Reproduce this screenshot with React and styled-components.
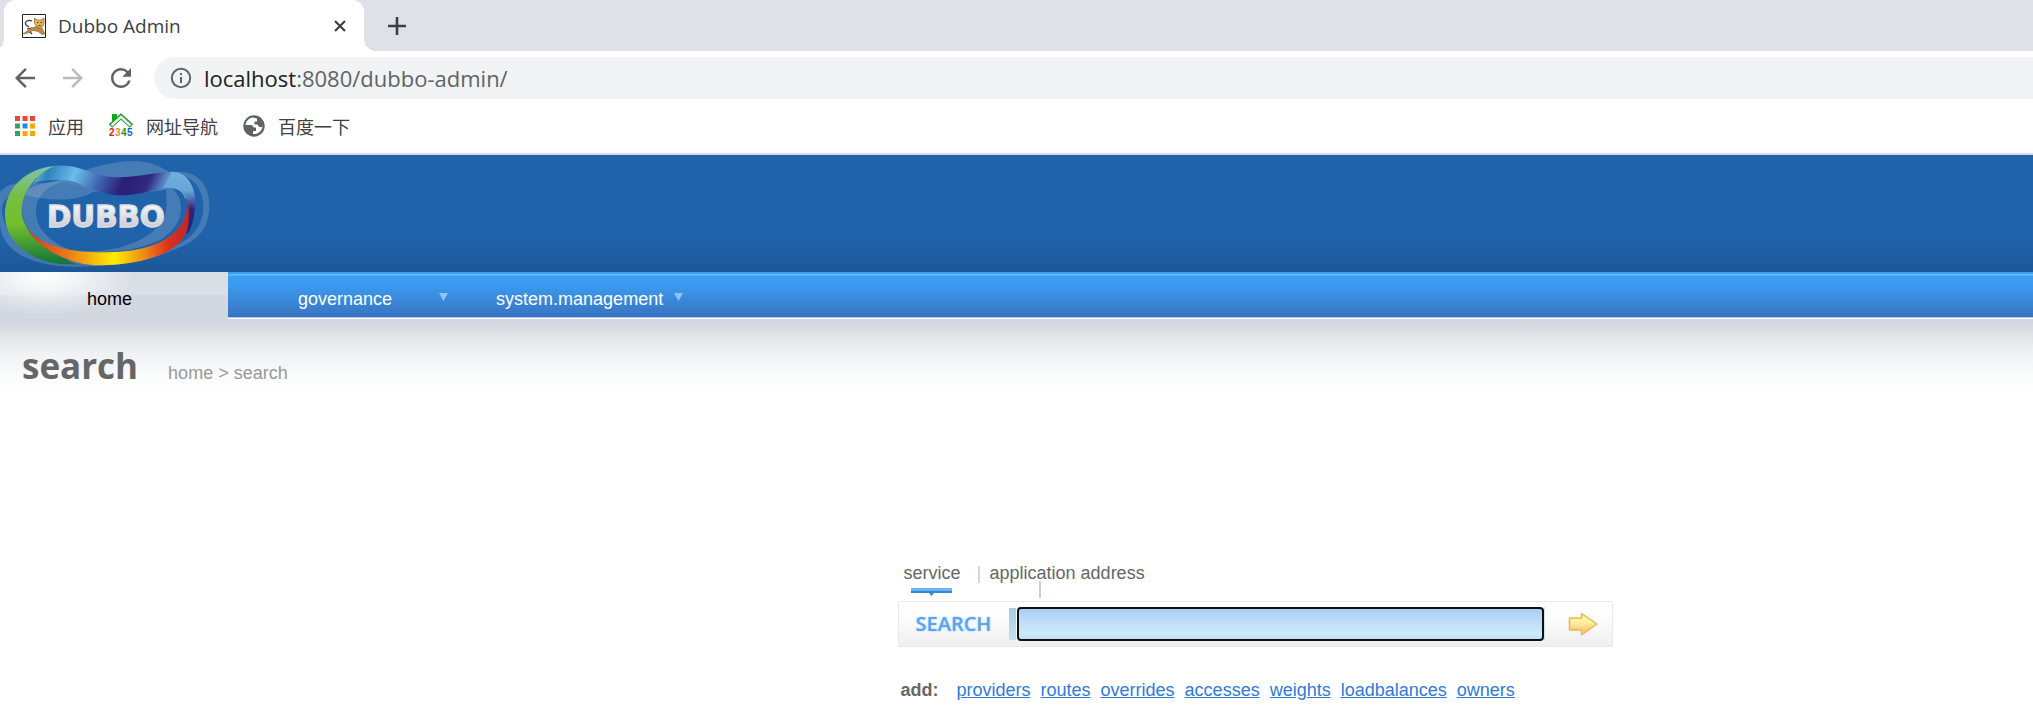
import * as React from 'react'
import styled, { createGlobalStyle, css } from 'styled-components'
import { MdArrowBack, MdArrowForward, MdRefresh } from 'react-icons/md'

const uiFont = '"Open Sans", "Noto Sans CJK SC", sans-serif'
const pageFont = '"Liberation Sans", Arial, sans-serif'

const menus = [
  { label: 'governance', offset: 70, gap: 47 },
  { label: 'system.management', offset: 48, gap: 11 },
]

const addLinks = [
  'providers',
  'routes',
  'overrides',
  'accesses',
  'weights',
  'loadbalances',
  'owners',
]

const appColors = [
  '#f44336', '#f44336', '#f44336',
  '#34a062', '#1e88f5', '#ffa600',
  '#34a062', '#ffa600', '#ffa600',
]

const App = () => (
  <>
    <GlobalStyle />
    <Browser />
    <Header>
      <DubboLogo />
    </Header>
    <Nav>
      <HomeLink href="#home">home</HomeLink>
      {menus.map(({ label, offset, gap }) => (
        <MenuLink key={label} href={`#${label}`} $offset={offset} $gap={gap}>
          {label}
          <Caret viewBox="0 0 9 8">
            <path d="M0 0h9L4.500 8z" fill="#8cc4f8" />
          </Caret>
        </MenuLink>
      ))}
    </Nav>
    <Main>
      <TitleRow>
        <Title>search</Title>
        <Crumbs>home &gt; search</Crumbs>
      </TitleRow>
      <SearchPanel />
    </Main>
  </>
)
export default App

const Browser = () => (
  <div>
    <TabStrip>
      <Tab>
        <TomcatIcon />
        <TabTitle>Dubbo Admin</TabTitle>
        <IconButton aria-label="Close tab">
          <svg width="12" height="12" viewBox="0 0 12 12">
            <path d="M1 1l10 10M11 1L1 11" stroke="#3c4043" strokeWidth="2.200" />
          </svg>
        </IconButton>
      </Tab>
      <IconButton aria-label="New tab">
        <svg width="18" height="18" viewBox="0 0 18 18">
          <path d="M9 0v18M0 9h18" stroke="#3c4043" strokeWidth="2.600" />
        </svg>
      </IconButton>
    </TabStrip>
    <Toolbar>
      <IconButton aria-label="Back">
        <MdArrowBack size={30} color="#5f6368" />
      </IconButton>
      <IconButton aria-label="Forward">
        <MdArrowForward size={30} color="#babcbe" />
      </IconButton>
      <IconButton aria-label="Reload">
        <MdRefresh size={30} color="#5f6368" />
      </IconButton>
      <Omnibox>
        <svg width="22" height="22" viewBox="0 0 22 22">
          <circle cx="11" cy="11" r="9.200" fill="none" stroke="#5f6368" strokeWidth="2" />
          <path d="M11 10v6M11 6v2" stroke="#5f6368" strokeWidth="2" />
        </svg>
        <Url>
          <b>localhost</b>:8080/dubbo-admin/
        </Url>
      </Omnibox>
    </Toolbar>
    <Bookmarks>
      <Bookmark href="#apps">
        <svg width="20" height="20" viewBox="0 0 20 20">
          {appColors.map((fill, i) => (
            <rect
              key={i}
              x={(i % 3) * 7.5}
              y={Math.floor(i / 3) * 7.5}
              width="5"
              height="5"
              fill={fill}
            />
          ))}
        </svg>
        应用
      </Bookmark>
      <Bookmark href="#2345">
        <HouseIcon />
        网址导航
      </Bookmark>
      <Bookmark href="#baidu">
        <GlobeIcon />
        百度一下
      </Bookmark>
    </Bookmarks>
  </div>
)

const SearchPanel = () => (
  <Panel>
    <SearchTabs>
      <SearchTab href="#service">
        service
        <ActiveMark viewBox="0 0 41 8">
          <path d="M0 0h41v5H23l-2.500 3L18 5H0z" fill="#3d87c8" />
          <path d="M0 0h41v3H0z" fill="#66b5f6" />
        </ActiveMark>
      </SearchTab>
      <Divider />
      <SearchTab href="#application">application</SearchTab>
      <SearchTab href="#address">address</SearchTab>
      <LowDivider />
    </SearchTabs>
    <SearchBox onSubmit={e => e.preventDefault()}>
      <SearchLabel htmlFor="keyword">SEARCH</SearchLabel>
      <FieldTrack>
        <Field id="keyword" type="text" />
      </FieldTrack>
      <GoButton aria-label="Go">
        <svg width="30" height="26" viewBox="0 0 30 26">
          <defs>
            <linearGradient id="go" x2="0" y2="1">
              <stop offset="0" stopColor="#fff6a0" />
              <stop offset=".4" stopColor="#fff2a0" />
              <stop offset=".8" stopColor="#ffc67c" />
              <stop offset="1" stopColor="#ffe48e" />
            </linearGradient>
          </defs>
          <path
            d="M1.500 7h12V2.500L29 13 13.500 24v-5h-12z"
            fill="url(#go)"
            stroke="#e2bb50"
            strokeWidth="1.500"
            strokeLinejoin="round"
          />
        </svg>
      </GoButton>
    </SearchBox>
    <AddRow>
      <strong>add:</strong>
      {addLinks.map(name => (
        <a key={name} href={`#${name}`}>
          {name}
        </a>
      ))}
    </AddRow>
  </Panel>
)

const TomcatIcon = () => (
  <svg width="24" height="24" viewBox="0 0 24 24">
    <path d="M.5.5h23v23H.5z" fill="#fff" stroke="#222" />
    <path
      d="M10 7C6 5 2 8 4 11l3 2M5 15l5-1M7 17l3 3"
      fill="none"
      stroke="#333"
      strokeWidth="1.200"
    />
    <path
      d="M1 19.500c3-1 5-3.500 8-5.500l4-1 2-1 5 2 3 6-3 .5-4-3-5-1-5 2.500-4 1z"
      fill="#c08a3c"
      stroke="#5c4420"
      strokeWidth=".4"
    />
    <path
      d="M12.500 4l2.500 2h4l3-2v5l-1 3-3.500 2-3.500-2-1.500-3z"
      fill="#e5b458"
      stroke="#6b5124"
      strokeWidth=".6"
    />
    <path d="M15 8.500h1.500M18.500 8.500H20M16.500 11.500h2" stroke="#4d3914" />
  </svg>
)

const HouseIcon = () => (
  <svg width="24" height="26" viewBox="0 0 24 26">
    <path d="M3 1h5v5L3 9z" fill="#12a812" />
    <path d="M1.500 13L12 3.500 22.500 13" fill="none" stroke="#27933a" strokeWidth="5" />
    <path d="M2.500 12.500L12 3.800 21.500 12.500" fill="none" stroke="#e2f5de" strokeWidth="2.400" />
    <g fontFamily="Liberation Sans" fontWeight="bold" fontSize="10">
      <text x="0" y="23" fill="#e02020">2</text>
      <text x="6" y="23" fill="#f58a1c">3</text>
      <text x="12" y="23" fill="#1c9a2c">4</text>
      <text x="18" y="23" fill="#1763c6">5</text>
    </g>
  </svg>
)

const GlobeIcon = () => (
  <svg width="22" height="22" viewBox="0 0 22 22">
    <circle cx="11" cy="11" r="10.700" fill="#5f6368" />
    <path
      d="M10 2.500C6 3 3 6 2.500 10h5c2 0 3 1 3 2.500h2.500v3.500h-3v3c5 .5 9-3 9.500-7.500-1 1-3 1-4-.500l-1-1.500h-3V6.500h2.500V3.500z"
      fill="#fff"
    />
  </svg>
)

const DubboLogo = () => (
  <svg width="210" height="117" viewBox="0 15 630 351">
    <defs>
      <linearGradient id="green" x2="0" y2="1">
        <stop offset="0" stopColor="#7cc4b4" />
        <stop offset=".3" stopColor="#78be46" />
        <stop offset=".6" stopColor="#72be2e" />
        <stop offset="1" stopColor="#0e7438" />
      </linearGradient>
      <linearGradient
        id="blue"
        gradientUnits="userSpaceOnUse"
        x1="110"
        y1="50"
        x2="560"
        y2="250"
      >
        <stop offset="0" stopColor="#77b9b9" />
        <stop offset=".08" stopColor="#2e84bd" />
        <stop offset=".23" stopColor="#6cbcea" />
        <stop offset=".38" stopColor="#3f68b0" />
        <stop offset=".52" stopColor="#2b1d78" />
        <stop offset=".66" stopColor="#30297f" />
        <stop offset=".78" stopColor="#66a8dc" />
        <stop offset=".88" stopColor="#6fb4e2" />
        <stop offset="1" stopColor="#4a62ad" />
      </linearGradient>
      <linearGradient id="edge" x2="0" y2="1">
        <stop offset="0" stopColor="#6db1e0" />
        <stop offset=".3" stopColor="#6aa4d8" />
        <stop offset=".6" stopColor="#2c2380" />
        <stop offset="1" stopColor="#282073" />
      </linearGradient>
      <linearGradient id="warm">
        <stop offset="0" stopColor="#c63b27" />
        <stop offset=".25" stopColor="#e9781a" />
        <stop offset=".54" stopColor="#ffee00" />
        <stop offset=".72" stopColor="#ee8d16" />
        <stop offset=".87" stopColor="#dc321d" />
        <stop offset="1" stopColor="#b9272a" />
      </linearGradient>
      <linearGradient id="word" x2="0" y2="1">
        <stop offset="0" stopColor="#fff" />
        <stop offset="1" stopColor="#bfc0c5" />
      </linearGradient>
    </defs>
    <g fill="#9fb6cf" fillOpacity=".3" fillRule="evenodd">
      <path d="M0 125C50 75 110 115 170 92C240 65 320 33 405 33C460 35 490 55 510 68C580 55 628 95 628 165C628 250 575 280 520 300C420 345 300 350 210 350C90 347 0 300 0 220zM5 170C5 245 70 300 150 325C320 350 470 330 565 265C620 220 620 150 590 105C560 70 520 66 480 90L350 125 280 125C220 160 130 150 80 135C50 125 20 130 5 170z" />
      <path d="M65 140C80 110 130 95 190 92L350 136 490 95C560 130 565 220 480 270C400 310 290 310 210 305C100 290 60 230 65 140zM108 180C105 230 140 270 210 300C330 315 430 280 480 225C505 200 500 150 498 120L350 136 190 95C140 105 110 140 108 180z" />
    </g>
    <path
      d="M168 47C75 55 15 115 15 195C17 285 105 345 215 343L235 345C150 315 65 250 65 180C68 120 105 75 168 47z"
      fill="url(#green)"
    />
    <path
      d="M168 47C245 42 280 82 355 82C420 80 470 66 515 65C565 65 588 115 585 165L555 145C545 115 520 108 485 116C440 125 410 136 360 136C280 134 240 91 190 91C155 88 120 90 98 102C115 75 140 55 168 47z"
      fill="url(#blue)"
    />
    <path
      d="M515 65C560 65 590 110 585 170C582 210 575 235 560 255L563 160C555 125 535 110 490 115z"
      fill="url(#edge)"
    />
    <path
      d="M78 233C120 300 210 346 300 346C430 344 545 310 563 235C569 205 567 175 564 150C562 235 500 307 310 307C200 307 125 285 78 233z"
      fill="url(#warm)"
    />
    <text
      x="141"
      y="231"
      fill="url(#word)"
      stroke="#dcdee2"
      strokeWidth="4"
      fontFamily="DejaVu Sans"
      fontWeight="bold"
      fontSize="88"
    >
      DUBBO
    </text>
  </svg>
)

const GlobalStyle = createGlobalStyle`
  * {
    box-sizing: border-box;
  }
  body {
    margin: 0;
    background: #fff;
    font-family: ${pageFont};
    font-size: 18px;
    line-height: 24px;
  }
  svg {
    display: block;
    flex: none;
  }
`

const IconButton = styled.button`
  display: flex;
  padding: 0;
  border: 0;
  background: none;
`

const TabStrip = styled.div`
  display: flex;
  align-items: center;
  gap: 36px;
  height: 51px;
  padding-left: 4px;
  background: #dee1e6;
  font-family: ${uiFont};
`

const flare = css`
  content: '';
  position: absolute;
  bottom: 0;
  width: 12px;
  height: 12px;
`

const Tab = styled.div`
  position: relative;
  display: flex;
  align-items: center;
  gap: 12px;
  width: 360px;
  height: 100%;
  margin-right: -12px;
  padding: 0 18px;
  border-radius: 12px 12px 0 0;
  background: #fff;

  &::before {
    ${flare}
    right: 100%;
    background: radial-gradient(circle at 0 0, #dee1e6 12px, #fff 12px);
  }
  &::after {
    ${flare}
    left: 100%;
    background: radial-gradient(circle at 100% 0, #dee1e6 12px, #fff 12px);
  }
`

const TabTitle = styled.span`
  flex: 1;
  color: #3c4043;
  font-size: 19px;
`

const Toolbar = styled.div`
  display: flex;
  align-items: center;
  gap: 18px;
  padding: 6px 0 0 10px;
`

const Omnibox = styled.div`
  display: flex;
  flex: 1;
  align-items: center;
  gap: 12px;
  height: 42px;
  padding-left: 16px;
  border-radius: 21px 0 0 21px;
  background: #f1f3f4;
`

const Url = styled.span`
  color: #5f6368;
  font-family: ${uiFont};
  font-size: 22px;

  b {
    color: #202124;
    font-weight: normal;
  }
`

const Bookmarks = styled.div`
  display: flex;
  align-items: center;
  gap: 25px;
  height: 56px;
  padding-left: 15px;
  border-bottom: 2px solid #d9dbde;
`

const Bookmark = styled.a`
  display: flex;
  align-items: center;
  gap: 13px;
  color: #3c4043;
  font: 18px/24px "Noto Sans CJK SC", sans-serif;
  text-decoration: none;
`

const Header = styled.header`
  background: linear-gradient(#2063ab 70%, #1c5798);
`

const Nav = styled.nav`
  display: flex;
  height: 47px;
  border-bottom: 1px solid #fff;
  background: linear-gradient(
    #3a9ff4 2px,
    #73bafa 2px 3px,
    #3ba0f5 4px,
    #3b9cf0 12px,
    #3873c0 45px,
    #a8c4ea 45px
  );
`

const HomeLink = styled.a`
  width: 228px;
  height: 47px;
  padding: 15px 0 0 87px;
  background:
    radial-gradient(ellipse 90px 40px at 45px 4px, #fff, #fff9 40%, #fff0),
    linear-gradient(#d9dee4, #dbe0e6 49%, #d2d8e0 50%, #d2d7e0);
  color: #000;
  text-decoration: none;
`

const MenuLink = styled.a`
  display: flex;
  gap: ${p => p.$gap}px;
  padding: 15px 0 0 ${p => p.$offset}px;
  color: #fff;
  text-decoration: none;
`

const Caret = styled.svg`
  width: 9px;
  height: 8px;
  margin-top: 6px;
`

const Main = styled.main`
  padding-top: 23px;
  background: linear-gradient(
    #d0d5df,
    #d9dde3 10px,
    #e0e4e8 16px,
    #e5e8ec 24px,
    #eaedf0 26px,
    #f5f6f8 46px,
    #fbfcfc 58px,
    #fff 72px
  );
`

const TitleRow = styled.div`
  display: flex;
  align-items: baseline;
  gap: 30px;
  padding-left: 22px;
`

const Title = styled.h1`
  margin: 0;
  color: #666;
  font: bold 35px/48px "Open Sans", sans-serif;
`

const Crumbs = styled.span`
  color: #999;
`

const Panel = styled.section`
  padding: 171px 0 24px calc(44% + 3px);
`

const SearchTabs = styled.div`
  position: relative;
  display: flex;
  gap: 5px;
  height: 40px;
  padding-left: 6px;
`

const SearchTab = styled.a`
  position: relative;
  color: #666;
  text-decoration: none;
`

const ActiveMark = styled.svg`
  position: absolute;
  top: 27px;
  left: 7px;
  width: 41px;
  height: 8px;
`

const Divider = styled.span`
  width: 2px;
  height: 17px;
  margin: 5px 5px 0 12px;
  background: #d5d9de;
`

/* hangs under the second tab label */
const LowDivider = styled.span`
  position: absolute;
  top: 20px;
  left: 141px;
  width: 2px;
  height: 17px;
  background: #c9ced6;
`

const SearchBox = styled.form`
  display: flex;
  align-items: center;
  width: 715px;
  height: 46px;
  border: 1px solid #e6e8ea;
  border-radius: 2px;
  background: linear-gradient(#fff, #fcfcfc 40%, #efefef);
`

const SearchLabel = styled.label`
  width: 110px;
  padding-left: 17px;
  color: #5aa5f2;
  font: 600 20px/24px "Open Sans", sans-serif;
  text-shadow: 0 0 2px #8cc4fa;
`

const FieldTrack = styled.div`
  flex: 1;
  padding-left: 8px;
  border-right: 1px solid #d3e2f0;
  background: linear-gradient(#a9c9e6, #c3e2f0) 0 50% / 7px 32px no-repeat;
`

const Field = styled.input`
  display: block;
  width: 100%;
  height: 34px;
  padding: 0 8px;
  border: 2px solid #101010;
  border-radius: 4px;
  outline: none;
  background: linear-gradient(#a9cdee, #b9daf6 30%, #c9eafd 80%, #c0e2f2);
  font: 18px ${pageFont};
`

const GoButton = styled(IconButton)`
  width: 67px;
  padding-left: 23px;
`

const AddRow = styled.div`
  display: flex;
  gap: 10px;
  margin-top: 31px;
  padding-left: 3px;

  strong {
    margin-right: 8px;
    color: #666;
  }
  a {
    color: #2f7bd9;
  }
`
